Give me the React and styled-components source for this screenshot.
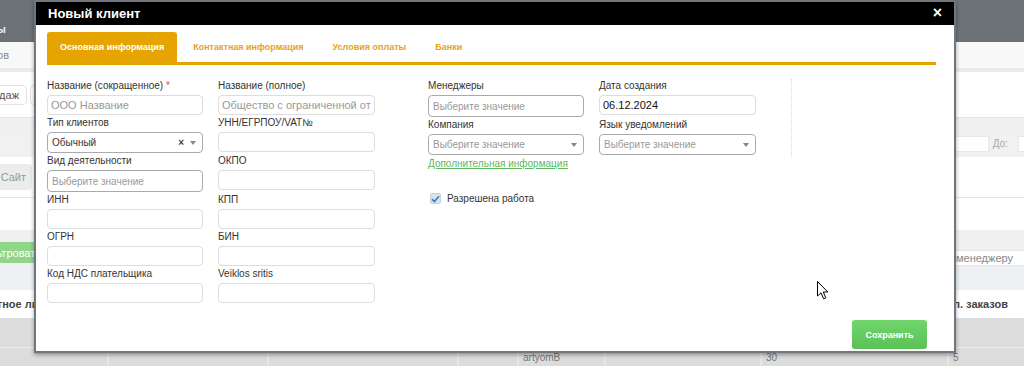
import React from 'react';
import styled, { createGlobalStyle } from 'styled-components';

const GlobalStyle = createGlobalStyle`
  html, body {
    margin: 0;
    padding: 0;
    background: #dcdcdc;
  }
  * {
    box-sizing: border-box;
  }
  body {
    font-family: "Liberation Sans", Arial, sans-serif;
  }
`;

// ---------- page behind the modal ----------

const Page = styled.div`
  position: relative;
  width: 1024px;
  height: 366px;
  overflow: hidden;
  display: flex;
  flex-direction: column;
  background: #dcdcdc;
`;

const Band = styled.div`
  height: ${p => p.$h}px;
  flex-shrink: 0;
  display: flex;
  align-items: ${p => p.$align || 'center'};
  justify-content: space-between;
  background: ${p => p.$bg || '#fff'};
  border-top: ${p => (p.$lineTop ? '1px solid #e4e4e4' : 'none')};
  border-bottom: ${p => (p.$lineBottom ? '1px solid #e4e4e4' : 'none')};
`;

const TopBar = styled(Band)`
  align-items: flex-end;
  padding-bottom: 7px;
  color: #eceeef;
  font-weight: bold;
  font-size: 11px;
`;

// holds content whose right edge is fixed, the rest runs off to the left
const Cut = styled.div`
  width: ${p => p.$w}px;
  padding-right: ${p => p.$pr || 0}px;
  display: flex;
  justify-content: flex-end;
  white-space: nowrap;
  flex-shrink: 0;
`;

const BgText = styled.span`
  font-size: ${p => p.$size || 11}px;
  color: ${p => p.$color || '#888'};
  font-weight: ${p => (p.$bold ? 'bold' : 'normal')};
`;

const BgButton = styled.div`
  height: ${p => p.$h || 20}px;
  padding: 0 ${p => p.$px || 7}px;
  display: flex;
  align-items: center;
  font-size: 11px;
  white-space: nowrap;
  color: ${p => p.$color || '#555'};
  background: ${p => p.$bg || '#fff'};
  border: ${p => (p.$border ? '1px solid #e2e2e2' : 'none')};
  border-radius: 4px;
`;

const LeftGroup = styled.div`
  display: flex;
  align-items: center;
  gap: 3px;
`;

const RightGroup = styled.div`
  display: flex;
  align-items: center;
  justify-content: flex-end;
  margin-top: ${p => p.$mt || 0}px;
`;

const BgInput = styled.div`
  width: ${p => p.$w}px;
  height: ${p => p.$h || 16}px;
  background: #fff;
  border: 1px solid #e8e8e8;
  border-right: ${p => (p.$open ? 'none' : '1px solid #e8e8e8')};
  font-size: 11px;
  color: #888;
  display: flex;
  align-items: center;
  justify-content: flex-end;
  padding-right: ${p => p.$pr || 0}px;
  white-space: nowrap;
`;

const BgLabel = styled.span`
  font-size: 10px;
  color: #aaa;
  margin: 0 10px 0 4px;
`;

const TableRow = styled.div`
  height: ${p => p.$h}px;
  flex-shrink: 0;
  display: grid;
  grid-template-columns: 107px 160px 190px 60px 87px 156px 187px 1fr;
  border-top: ${p => (p.$line ? '1px solid #ececec' : 'none')};
`;

const Cell = styled.div`
  border-left: ${p => (p.$first ? 'none' : '2px solid #e6e6e6')};
  padding: 4px 4px 0;
  font-size: 10px;
  color: #777;
  white-space: nowrap;
`;

// ---------- modal ----------

const Modal = styled.div`
  position: absolute;
  top: 0;
  left: 34px;
  width: 922px;
  height: 353px;
  background: #fff;
  border: 2px solid #6f777c;
  box-shadow: 0 2px 4px rgba(0, 0, 0, 0.35);
  display: flex;
  flex-direction: column;
`;

const Header = styled.div`
  height: 23px;
  background: #000;
  display: flex;
  align-items: center;
  justify-content: space-between;
  padding: 0 12px 0 12px;
  color: #fff;
`;

const Title = styled.div`
  font-size: 13px;
  font-weight: bold;
`;

const Close = styled.div`
  font-size: 16px;
  font-weight: bold;
  line-height: 1;
  margin-top: -1px;
`;

const Body = styled.div`
  flex: 1;
  display: flex;
  flex-direction: column;
  padding: 7px 18px 0 11px;
`;

const Tabs = styled.div`
  display: flex;
  height: 33px;
  border-bottom: 3px solid #e6a400;
`;

const Tab = styled.div`
  height: 30px;
  padding: 0 13px;
  margin-right: 3px;
  display: flex;
  align-items: center;
  font-size: 9px;
  font-weight: bold;
  border-radius: 3px 3px 0 0;
  color: ${p => (p.$active ? '#fff' : '#e6a21a')};
  background: ${p => (p.$active ? '#e6a400' : 'transparent')};
`;

const Form = styled.div`
  display: flex;
  align-items: flex-start;
  margin-top: 14px;
`;

const Grid = styled.div`
  display: grid;
  grid-template-columns: 156px 157px;
  column-gap: 15px;
  row-gap: 1px;
  align-items: start;
`;

const Column = styled.div`
  display: flex;
  flex-direction: column;
  margin-left: ${p => p.$ml || 0}px;
`;

const Field = styled.div`
  display: flex;
  flex-direction: column;
`;

const Label = styled.div`
  font-size: 10px;
  line-height: 14px;
  color: #333;
  margin-bottom: 2px;
  white-space: nowrap;
`;

const Req = styled.span`
  color: #d9534f;
`;

const TextInput = styled.input`
  width: 100%;
  height: 20px;
  margin: 0;
  border: 1px solid #ddd;
  border-radius: 4px;
  padding: 0 3px;
  font-family: "Liberation Sans", Arial, sans-serif;
  font-size: 11px;
  color: ${p => (p.$strong ? '#111' : '#333')};
  background: #fff;
  outline: none;

  &::placeholder {
    color: #999;
  }
`;

const Select = styled.div`
  height: ${p => p.$h || 21}px;
  border: 1px solid #aaa;
  border-radius: 4px;
  display: flex;
  align-items: center;
  padding: 0 6px 0 4px;
  font-size: 10px;
  color: ${p => (p.$value ? '#333' : '#999')};
  background: #fff;
`;

const SelectText = styled.span`
  flex: 1;
  white-space: nowrap;
  overflow: hidden;
`;

const Clear = styled.span`
  font-size: 10px;
  font-weight: bold;
  color: #444;
  margin-right: 6px;
`;

const Caret = styled.span`
  width: 0;
  height: 0;
  border-left: 3.5px solid transparent;
  border-right: 3.5px solid transparent;
  border-top: 4px solid #888;
`;

const MoreLink = styled.a`
  font-size: 10px;
  line-height: 14px;
  color: #5cb85c;
  text-decoration: underline;
  margin-top: 2px;
  white-space: nowrap;
`;

const CheckRow = styled.label`
  display: flex;
  align-items: center;
  gap: 6px;
  margin-top: 22px;
  margin-left: 2px;
  font-size: 10px;
  color: #333;
`;

const CheckBox = styled.span`
  width: 11px;
  height: 11px;
  border-radius: 2px;
  background: #dbe3ec;
  border: 1px solid #c6d0db;
  display: flex;
  align-items: center;
  justify-content: center;
`;

const Divider = styled.div`
  margin-left: 35px;
  width: 0;
  height: 78px;
  border-left: 1px dotted #d6d6d6;
`;

const Footer = styled.div`
  margin-top: auto;
  display: flex;
  justify-content: flex-end;
  padding: 0 9px 2px 0;
`;

const SaveButton = styled.button`
  width: 75px;
  height: 29px;
  border: none;
  border-radius: 3px;
  background: linear-gradient(#70d56b, #5bc157);
  color: #fff;
  font-family: "Liberation Sans", Arial, sans-serif;
  font-size: 9px;
  font-weight: bold;
  cursor: pointer;
`;

const Pointer = styled.svg`
  position: absolute;
  left: 781px;
  top: 279px;
`;

const fieldsLeft = [
  { label: 'Название (сокращенное)', req: true, placeholder: 'ООО Название' },
  { label: 'Название (полное)', placeholder: 'Общество с ограниченной ответственностью' },
  { label: 'Тип клиентов', select: 'Обычный' },
  { label: 'УНН/ЕГРПОУ/VAT№' },
  { label: 'Вид деятельности', multi: true },
  { label: 'ОКПО' },
  { label: 'ИНН' },
  { label: 'КПП' },
  { label: 'ОГРН' },
  { label: 'БИН' },
  { label: 'Код НДС плательщика' },
  { label: 'Veiklos sritis' },
];

const renderControl = f => {
  if (f.select) {
    return (
      <Select $value>
        <SelectText>{f.select}</SelectText>
        <Clear>×</Clear>
        <Caret />
      </Select>
    );
  }
  if (f.multi) {
    return (
      <Select $h={22}>
        <SelectText>Выберите значение</SelectText>
      </Select>
    );
  }
  return <TextInput placeholder={f.placeholder || ''} readOnly />;
};

export default function App() {
  return (
    <>
      <GlobalStyle />
      <Page>
        <TopBar $h={42} $bg="#6c7277">
          <Cut $w={6}>Клиенты</Cut>
        </TopBar>
        <Band $h={26} $bg="#f8f8f8">
          <Cut $w={9}>
            <BgText>Поиск клиентов</BgText>
          </Cut>
        </Band>
        <Band $h={4} $bg="#e8ecef" />
        <Band $h={46} $lineBottom>
          <LeftGroup>
            <Cut $w={27}>
              <BgButton $border>Отдел продаж</BgButton>
            </Cut>
            <BgButton $border>Розница</BgButton>
          </LeftGroup>
        </Band>
        <Band $h={12} $bg="#eef0f2" />
        <Band $h={27} $bg="#f1f1f1">
          <span />
          <RightGroup>
            <BgInput $w={100} $h={16} />
            <BgLabel>До:</BgLabel>
            <BgInput $w={6} $h={16} $open />
          </RightGroup>
        </Band>
        <Band $h={40}>
          <Cut $w={32}>
            <BgButton $h={26} $px={6} $bg="#ececec" $color="#999">Сайт</BgButton>
          </Cut>
        </Band>
        <Band $h={33} $lineTop />
        <Band $h={12} $bg="#eef0f2" />
        <Band $h={26} $bg="#eef0f2" $align="flex-start">
          <Cut $w={48}>
            <BgButton $h={21} $bg="#8fd688" $color="#fff">Фильтровать</BgButton>
          </Cut>
          <RightGroup $mt={8}>
            <BgInput $w={120} $h={16} $pr={11} $open>
              По менеджеру
            </BgInput>
          </RightGroup>
        </Band>
        <Band $h={22} $bg="#eef1f3" />
        <Band $h={28}>
          <Cut $w={52}>
            <BgText $bold $color="#444">Контактное лицо</BgText>
          </Cut>
          <Cut $w={100} $pr={16}>
            <BgText $bold $color="#444">Кол. заказов</BgText>
          </Cut>
        </Band>
        <TableRow $h={29} />
        <TableRow $h={20} $line>
          <Cell $first />
          <Cell />
          <Cell />
          <Cell />
          <Cell>artyomB</Cell>
          <Cell />
          <Cell>30</Cell>
          <Cell>5</Cell>
        </TableRow>

        <Modal>
          <Header>
            <Title>Новый клиент</Title>
            <Close>×</Close>
          </Header>
          <Body>
            <Tabs>
              <Tab $active>Основная информация</Tab>
              <Tab>Контактная информация</Tab>
              <Tab>Условия оплаты</Tab>
              <Tab>Банки</Tab>
            </Tabs>
            <Form>
              <Grid>
                {fieldsLeft.map(f => (
                  <Field key={f.label}>
                    <Label>
                      {f.label}
                      {f.req && <Req> *</Req>}
                    </Label>
                    {renderControl(f)}
                  </Field>
                ))}
              </Grid>
              <Column $ml={53}>
                <Grid>
                  <Field>
                    <Label>Менеджеры</Label>
                    <Select $h={22}>
                      <SelectText>Выберите значение</SelectText>
                    </Select>
                  </Field>
                  <Field>
                    <Label>Дата создания</Label>
                    <TextInput $strong defaultValue="06.12.2024" readOnly />
                  </Field>
                  <Field>
                    <Label>Компания</Label>
                    <Select>
                      <SelectText>Выберите значение</SelectText>
                      <Caret />
                    </Select>
                  </Field>
                  <Field>
                    <Label>Язык уведомлений</Label>
                    <Select>
                      <SelectText>Выберите значение</SelectText>
                      <Caret />
                    </Select>
                  </Field>
                </Grid>
                <MoreLink>Дополнительная информация</MoreLink>
                <CheckRow>
                  <CheckBox>
                    <svg width="9" height="8" viewBox="0 0 9 8">
                      <path d="M1 4.2 L3.4 6.5 L8 1.3" fill="none" stroke="#3a78c9" strokeWidth="1.6" />
                    </svg>
                  </CheckBox>
                  Разрешена работа
                </CheckRow>
              </Column>
              <Divider />
            </Form>
            <Footer>
              <SaveButton>Сохранить</SaveButton>
            </Footer>
          </Body>
          <Pointer width="12" height="19" viewBox="0 0 12 19">
            <path
              d="M0.5 0.5 L0.5 15 L4 11.8 L6.6 17.8 L8.8 16.8 L6.3 11 L10.8 11 Z"
              fill="#fff"
              stroke="#000"
              strokeWidth="1"
              strokeLinejoin="round"
            />
          </Pointer>
        </Modal>
      </Page>
    </>
  );
}
